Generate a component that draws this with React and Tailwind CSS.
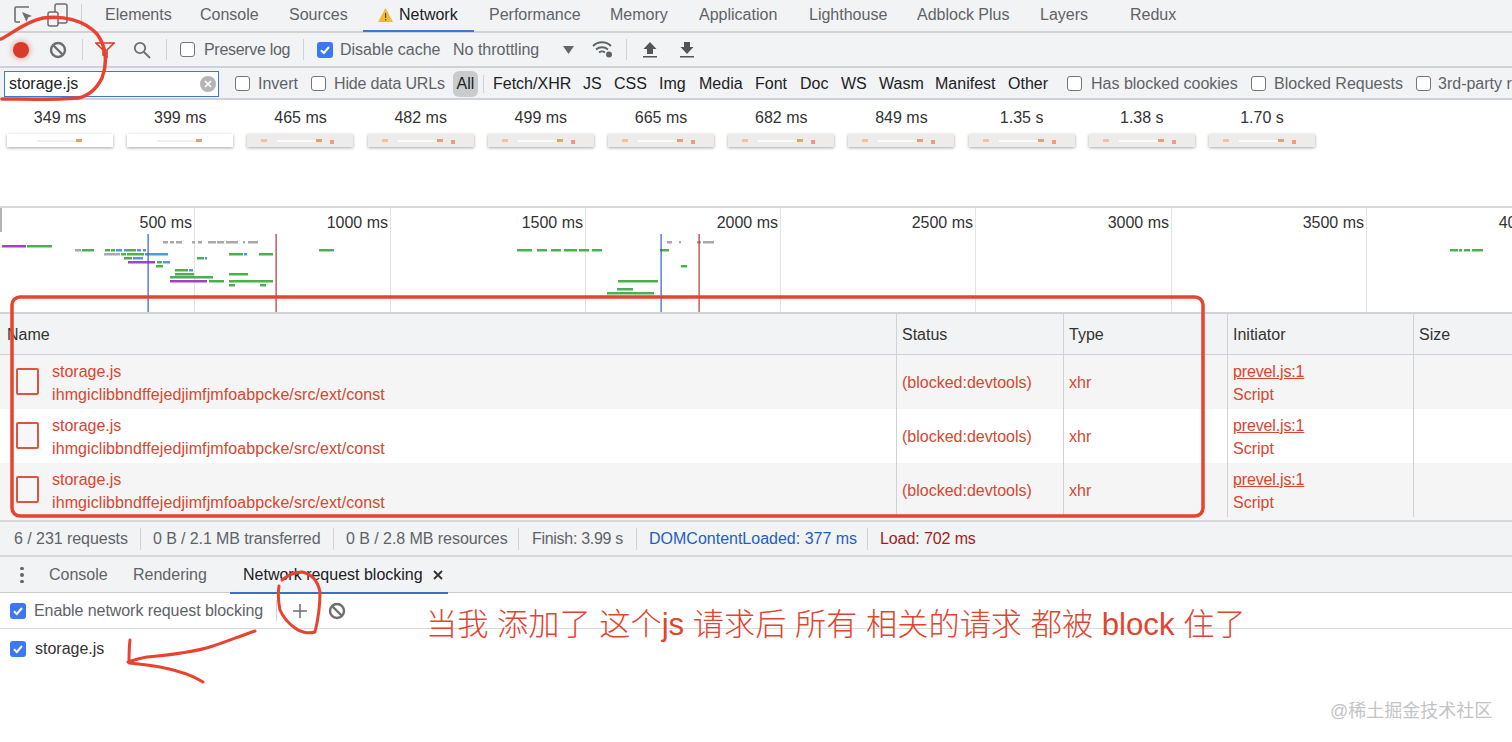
import React from "react";

const tabs = [
  ["Elements", 95],
  ["Console", 89],
  ["Sources", 74],
];
const tabsAfter = [
  ["Performance", 121],
  ["Memory", 89],
  ["Application", 110],
  ["Lighthouse", 108],
  ["Adblock Plus", 123],
  ["Layers", 90],
  ["Redux", 60],
];
const filterTypes = [
  ["Fetch/XHR", 90],
  ["JS", 31],
  ["CSS", 45],
  ["Img", 40],
  ["Media", 56],
  ["Font", 45],
  ["Doc", 41],
  ["WS", 38],
  ["Wasm", 56],
  ["Manifest", 73],
  ["Other", 59],
];
const frames = ["349 ms", "399 ms", "465 ms", "482 ms", "499 ms", "665 ms", "682 ms", "849 ms", "1.35 s", "1.38 s", "1.70 s"];
const ticks = [
  ["500 ms", 195],
  ["1000 ms", 196],
  ["1500 ms", 195],
  ["2000 ms", 195],
  ["2500 ms", 195],
  ["3000 ms", 196],
  ["3500 ms", 195],
  ["4000 ms", 196],
];

const G = "#4caf50";
const B = "#4a9be0";
const P = "#a63fc7";
const K = "#a9a9a9";
const bars = [
  [2, 24, 246, P], [27, 25, 246, G],
  [75, 6, 250, K], [82, 12, 250, G], [105, 5, 250, G], [111, 4, 250, G], [116, 6, 250, B], [124, 3, 250, B], [127, 9, 250, G], [137, 4, 250, B], [143, 3, 250, B],
  [104, 16, 254, K], [121, 5, 254, G], [127, 17, 254, G], [145, 23, 254, B], [229, 14, 254, G], [244, 3, 254, B], [259, 14, 254, G],
  [124, 8, 258, G], [133, 10, 258, B], [197, 7, 258, G], [205, 2, 258, B],
  [128, 27, 262, P], [157, 5, 262, G], [163, 7, 262, B],
  [156, 7, 266, G], [175, 13, 270, G], [189, 4, 270, B],
  [175, 19, 274, G], [229, 19, 274, G], [170, 43, 277, G],
  [170, 37, 281, P], [209, 15, 281, G], [229, 44, 281, G],
  [229, 6, 285, G], [260, 6, 285, G],
  [319, 13, 250, G], [332, 2, 250, B],
  [517, 15, 250, G], [537, 10, 250, G], [551, 10, 250, G], [564, 13, 250, G], [579, 10, 250, G], [592, 10, 250, G],
  [660, 9, 250, G], [681, 6, 266, G], [618, 40, 281, G], [617, 16, 289, G], [607, 47, 293, G],
  [1450, 8, 250, G], [1459, 3, 250, G], [1464, 6, 250, G], [1472, 11, 250, G],
  [163, 5, 242, K], [170, 4, 242, K], [176, 6, 242, K], [192, 3, 242, K], [198, 4, 242, K], [208, 8, 242, K], [217, 7, 242, K], [226, 12, 242, K], [243, 2, 242, K], [248, 10, 242, K],
  [667, 5, 242, K], [679, 2, 242, K], [697, 4, 242, K], [703, 11, 242, K],
];

function Check({ checked }) {
  if (checked) {
    return (
      <span className="flex h-4 w-4 shrink-0 items-center justify-center rounded-[3px] bg-[#3b78f2]">
        <svg width="12" height="12" viewBox="0 0 12 12" fill="none">
          <path d="M2 6.3 4.8 9 10 3" stroke="#fff" strokeWidth="2" />
        </svg>
      </span>
    );
  }
  return <span className="h-[15px] w-[15px] shrink-0 rounded-[3px] border border-[#767676] bg-white" />;
}

function BlockIcon() {
  return (
    <svg width="18" height="18" viewBox="0 0 18 18" fill="none" stroke="#6e6e6e" strokeWidth="2.4">
      <circle cx="9" cy="9" r="7" />
      <path d="M4 4l10 10" />
    </svg>
  );
}

function Sep({ className }) {
  return <span className={"w-px shrink-0 bg-[#d0d2d5] " + className} />;
}

function Thumb({ blank }) {
  return (
    <svg width="106" height="13" viewBox="0 0 106 13" className="shadow-[0_1px_3px_rgba(0,0,0,0.35)]">
      <rect width="106" height="13" fill={blank ? "#ffffff" : "#eeeceb"} />
      <rect x="30" y="6" width="42" height="2" fill={blank ? "#efefef" : "#fbfbfb"} />
      <rect x="69" y="5" width="6" height="3" fill="#ee9f5d" />
      {!blank && <rect x="83" y="6" width="4" height="4" fill="#ec9a8a" />}
      {!blank && <rect x="14" y="5" width="6" height="3" fill="#f2c1a0" />}
    </svg>
  );
}

function NameRow({ className }) {
  return (
    <div className={"flex text-[#d9452f] " + className}>
      <div className="flex w-[897px] items-center border-r border-[#cfd1d4] pl-[16px]">
        <span className="mb-[2px] h-[27px] w-[23px] rounded-[2px] border-2 border-[#e0543f] bg-[#f7f7f7]" />
        <div className="ml-[13px] flex flex-col pt-[2px] leading-[23px]">
          <span>storage.js</span>
          <span className="tracking-[0.09px]">ihmgiclibbndffejedjimfjmfoabpcke/src/ext/const</span>
        </div>
      </div>
      <div className="flex w-[167px] items-center border-r border-[#cfd1d4] pl-[5px] pt-[2px]">(blocked:devtools)</div>
      <div className="flex w-[164px] items-center border-r border-[#cfd1d4] pl-[5px] pt-[2px]">xhr</div>
      <div className="flex w-[186px] flex-col justify-center border-r border-[#cfd1d4] pl-[5px] pt-[2px] leading-[23px]">
        <span className="tracking-[-0.15px] underline">prevel.js:1</span>
        <span>Script</span>
      </div>
    </div>
  );
}

function TopTabs() {
  return (
    <div className="flex h-[33px] items-center border-b-2 border-[#d0d2d5] bg-[#f1f3f4] pb-px text-[#5f6368]">
      <div className="flex w-[105px] items-center">
        <svg width="22" height="22" viewBox="0 0 22 22" fill="none" className="ml-[12px]">
          <path d="M17 3H4a1 1 0 0 0-1 1v13a1 1 0 0 0 1 1h4" stroke="#6e6e6e" strokeWidth="1.6" />
          <path d="M10 8l10 4-4 1.6L14.5 18z" fill="#6e6e6e" />
        </svg>
        <svg width="22" height="24" viewBox="0 0 22 24" fill="none" stroke="#6e6e6e" strokeWidth="1.5" className="ml-[13px]">
          <rect x="8" y="1" width="12" height="19" rx="2" />
          <rect x="1" y="9" width="10" height="14" rx="2" fill="#f1f3f4" />
        </svg>
        <Sep className="ml-[12px] h-[23px]" />
      </div>
      {tabs.map(([t, w]) => (
        <div key={t} style={{ width: w }}>{t}</div>
      ))}
      <div className="-mb-[1px] flex h-[33px] w-[111px] items-center border-b-2 border-[#3b78d8] pl-[15px] text-[#202124]">
        <svg width="15" height="14" viewBox="0 0 15 14" className="mr-[6px]">
          <path d="M7.5 0 15 14H0z" fill="#f0b93a" />
          <path d="M7 5h1.2v5H7zM7 11h1.2v1.5H7z" fill="#5f4a10" />
        </svg>
        Network
      </div>
      <div className="w-[15px]" />
      {tabsAfter.map(([t, w]) => (
        <div key={t} style={{ width: w }}>{t}</div>
      ))}
    </div>
  );
}

function Toolbar() {
  return (
    <div className="flex h-[35px] items-center border-b-2 border-[#d0d2d5] bg-[#f1f3f4] text-[#5f6368]">
      <span className="ml-[13px] h-4 w-4 rounded-full bg-[#d93b2b] shadow-[0_0_4px_2px_rgba(217,59,43,0.3)]" />
      <span className="ml-[20px] flex"><BlockIcon /></span>
      <Sep className="ml-[15px] h-[21px]" />
      <svg width="20" height="18" viewBox="0 0 20 18" fill="none" stroke="#d93b2b" strokeWidth="1.6" className="ml-[12px]">
        <path d="M1 2h18l-7 7v7l-4-2V9z" />
      </svg>
      <svg width="18" height="18" viewBox="0 0 18 18" fill="none" stroke="#6e6e6e" strokeWidth="1.8" className="ml-[18px]">
        <circle cx="7" cy="7" r="5.2" />
        <path d="M11 11l6 6" />
      </svg>
      <Sep className="ml-[15px] h-[21px]" />
      <span className="ml-[13px] flex"><Check /></span>
      <span className="ml-[9px] w-[99px] tracking-[-0.3px]">Preserve log</span>
      <Sep className="h-[21px]" />
      <span className="ml-[13px] flex"><Check checked /></span>
      <span className="ml-[7px] w-[113px]">Disable cache</span>
      <span className="w-[110px]">No throttling</span>
      <svg width="11" height="8" viewBox="0 0 11 8" className="mr-[18px]"><path d="M0 0h11L5.5 8z" fill="#666" /></svg>
      <svg width="22" height="18" viewBox="0 0 22 18" fill="none" stroke="#5f6368" strokeWidth="1.8">
        <path d="M1 5c5-5 13-5 18 0M4 8.5c3.5-3 8.5-3 12 0M7 11.5c2-1.5 4-1.5 6 0" />
        <circle cx="17" cy="13.5" r="3" fill="#5f6368" stroke="none" />
      </svg>
      <Sep className="ml-[12px] h-[21px]" />
      <svg width="14" height="16" viewBox="0 0 14 16" fill="#555" className="ml-[16px]">
        <path d="M7 0l6.5 7H10v5H4V7H.5zM0 14h14v1.5H0z" />
      </svg>
      <svg width="14" height="16" viewBox="0 0 14 16" fill="#555" className="ml-[23px]">
        <path d="M4 0h6v5h3.5L7 12 .5 5H4zM0 14h14v1.5H0z" />
      </svg>
    </div>
  );
}

function FilterBar() {
  return (
    <div className="flex h-[32px] items-center border-b-2 border-[#d0d2d5] bg-[#f1f3f4] pt-px text-[#202124] [&>*]:shrink-0">
      <div className="ml-[4px] flex h-[26px] w-[215px] items-center justify-between border border-[#3b78d8] bg-white pl-[4px] pr-[2px]">
        <span>storage.js</span>
        <span className="flex h-4 w-4 items-center justify-center rounded-full bg-[#b5b5b5]">
          <svg width="8" height="8" viewBox="0 0 8 8" stroke="#fff" strokeWidth="1.6"><path d="M1 1l6 6M7 1 1 7" /></svg>
        </span>
      </div>
      <span className="ml-[16px] flex"><Check /></span>
      <span className="ml-[8px] w-[53px] text-[#5f6368]">Invert</span>
      <Check />
      <span className="ml-[8px] w-[119px] tracking-[-0.15px] text-[#5f6368]">Hide data URLs</span>
      <span className="flex h-[26px] w-[25px] items-center justify-center rounded-[6px] bg-[#c9cbcd]">All</span>
      <Sep className="ml-[5px] h-[18px]" />
      <div className="ml-[9px] flex">
        {filterTypes.map(([t, w]) => (
          <span key={t} style={{ width: w }}>{t}</span>
        ))}
      </div>
      <Check />
      <span className="ml-[9px] w-[160px] text-[#5f6368]">Has blocked cookies</span>
      <Check />
      <span className="ml-[8px] w-[142px] text-[#5f6368]">Blocked Requests</span>
      <Check />
      <span className="ml-[7px] whitespace-nowrap text-[#5f6368]">3rd-party r</span>
    </div>
  );
}

function Filmstrip() {
  return (
    <div className="flex h-[108px] items-start border-b-2 border-[#d6d7d9] bg-white pt-[7px] text-[#333]">
      {frames.map((f, i) => (
        <div key={f} className="flex w-[120.2px] flex-col items-center gap-[5px]">
          <span className="leading-[22px]">{f}</span>
          <Thumb blank={i < 2} />
        </div>
      ))}
    </div>
  );
}

function Overview() {
  return (
    <div className="relative h-[106px] border-b-2 border-[#d0d2d5] bg-white text-[#333]">
      <div className="flex h-full">
        {ticks.map(([t, w]) => (
          <div key={t} className="flex shrink-0 justify-end border-r border-[#e3e3e3] pr-[2px] pt-[4px] leading-[22px]" style={{ width: w }}>
            {t}
          </div>
        ))}
      </div>
      <span className="absolute left-0 top-0 h-[24px] w-[2px] bg-[#b5b5b5]" />
      <svg width="1512" height="106" className="absolute left-0 top-0">
        {bars.map(([x, w, y, c], i) => (
          <rect key={i} x={x} y={y - 209} width={w} height="2.5" fill={c} />
        ))}
        <rect x="147.5" y="26" width="1.2" height="78" fill="#2f62c4" />
        <rect x="275.5" y="26" width="1.2" height="78" fill="#a83a32" />
        <rect x="660.5" y="26" width="1.2" height="78" fill="#2f62c4" />
        <rect x="698.5" y="26" width="1.2" height="78" fill="#a83a32" />
      </svg>
    </div>
  );
}

function NetworkTable() {
  return (
    <div className="flex-none">
      <div className="flex h-[41px] border-b border-[#cfd1d4] bg-[#f1f3f4] text-[#333] [&>*]:pt-[2px]">
        <div className="flex w-[897px] items-center border-r border-[#cfd1d4] pl-[7px]">Name</div>
        <div className="flex w-[167px] items-center border-r border-[#cfd1d4] pl-[5px]">Status</div>
        <div className="flex w-[164px] items-center border-r border-[#cfd1d4] pl-[5px]">Type</div>
        <div className="flex w-[186px] items-center border-r border-[#cfd1d4] pl-[5px]">Initiator</div>
        <div className="flex items-center pl-[5px]">Size</div>
      </div>
      <NameRow className="h-[54px] bg-[#f5f5f5]" />
      <NameRow className="h-[54px] bg-white" />
      <NameRow className="h-[57px] bg-[#f5f5f5] pb-[3px]" />
    </div>
  );
}

function StatusBar() {
  return (
    <div className="flex h-[37px] items-center border-y-2 border-[#d6d7d9] bg-[#f1f3f4] text-[#5f6368] [&>span]:whitespace-nowrap">
      <span className="ml-[14px] w-[114px] tracking-[-0.05px]">6 / 231 requests</span>
      <Sep className="ml-[12px] h-[22px]" />
      <span className="ml-[12px] w-[168px] tracking-[-0.1px]">0 B / 2.1 MB transferred</span>
      <Sep className="ml-[12px] h-[22px]" />
      <span className="ml-[12px] w-[161px] tracking-[-0.05px]">0 B / 2.8 MB resources</span>
      <Sep className="ml-[11px] h-[22px]" />
      <span className="ml-[13px] w-[92px] tracking-[-0.3px]">Finish: 3.99 s</span>
      <Sep className="ml-[12px] h-[22px]" />
      <span className="ml-[12px] w-[207px] text-[#1e5fbf]">DOMContentLoaded: 377 ms</span>
      <Sep className="ml-[11px] h-[22px]" />
      <span className="ml-[12px] tracking-[-0.1px] text-[#a11d1d]">Load: 702 ms</span>
    </div>
  );
}

function Drawer() {
  return (
    <div className="flex-1 bg-white">
      <div className="flex h-[36px] items-center border-b border-[#c9cbce] bg-[#f1f3f4] pt-px text-[#5f6368]">
        <span className="ml-[20px] flex flex-col gap-[3px]">
          <i className="h-[3.5px] w-[3.5px] rounded-full bg-[#666]" />
          <i className="h-[3.5px] w-[3.5px] rounded-full bg-[#666]" />
          <i className="h-[3.5px] w-[3.5px] rounded-full bg-[#666]" />
        </span>
        <span className="ml-[25.5px] w-[84px]">Console</span>
        <span className="w-[97px]">Rendering</span>
        <div className="-mb-px flex h-[36px] w-[218px] items-center border-b-2 border-[#3b6fc9] pl-[13px] text-[#202124]">
          Network request blocking
          <svg width="10" height="10" viewBox="0 0 10 10" stroke="#333" strokeWidth="1.8" className="ml-[10px]"><path d="M1 1l8 8M9 1 1 9" /></svg>
        </div>
      </div>
      <div className="flex h-[36px] items-center border-b border-[#d9dadc] text-[#5f6368]">
        <span className="ml-[10px] flex"><Check checked /></span>
        <span className="ml-[8px] w-[242px] tracking-[-0.07px]">Enable network request blocking</span>
        <Sep className="h-[21px]" />
        <svg width="14" height="14" viewBox="0 0 14 14" stroke="#6e6e6e" strokeWidth="1.5" className="ml-[16px]"><path d="M7 0v14M0 7h14" /></svg>
        <span className="ml-[21px] flex"><BlockIcon /></span>
      </div>
      <div className="flex h-[38px] items-center pt-px text-[#333]">
        <span className="ml-[10px] flex"><Check checked /></span>
        <span className="ml-[9px]">storage.js</span>
      </div>
    </div>
  );
}

export default function App() {
  return (
    <div
      className="relative flex h-[742px] w-[1512px] flex-col overflow-hidden bg-white text-[16px]"
      style={{ fontFamily: '"Liberation Sans", "Noto Sans CJK SC", sans-serif' }}
    >
      <TopTabs />
      <Toolbar />
      <FilterBar />
      <Filmstrip />
      <Overview />
      <NetworkTable />
      <StatusBar />
      <Drawer />

      {/* hand drawn notes on top of the screenshot */}
      <svg width="1512" height="742" fill="none" stroke="#e8432e" strokeLinecap="round" strokeLinejoin="round" className="pointer-events-none absolute left-0 top-0">
        <path strokeWidth="3.5" d="M1 39C12 34 24 22 43 18C62 15 84 20 97 34C106 46 108 62 102 78C96 90 88 96 78 98C52 100 24 99 2 99" />
        <rect x="12" y="297" width="1191" height="219" rx="8" strokeWidth="3.5" />
        <path strokeWidth="3" d="M282 580C288 575 295 572 302 572C312 574 318 582 320 592C320 606 318 620 315 632C308 634 300 632 295 628C288 623 283 617 280 610C278 600 278 592 279 586" />
        <path strokeWidth="3" d="M255 631C240 636 226 642 213 646C195 652 170 655 147 657C140 658 134 660 128 662M130 640C129 648 129 656 129 663C140 664 150 665 160 667C176 670 192 675 203 682" />
      </svg>
      <div className="absolute left-[426px] top-[603px] whitespace-nowrap text-[31.2px] font-light leading-[44px] text-[#e0452f]">
        当我 添加了 这个js 请求后 所有 相关的请求 都被 block 住了
      </div>
      <div className="absolute left-[1330px] top-[699px] whitespace-nowrap text-[18px] leading-[24px] text-[#c4c4c4]">
        @稀土掘金技术社区
      </div>
    </div>
  );
}
